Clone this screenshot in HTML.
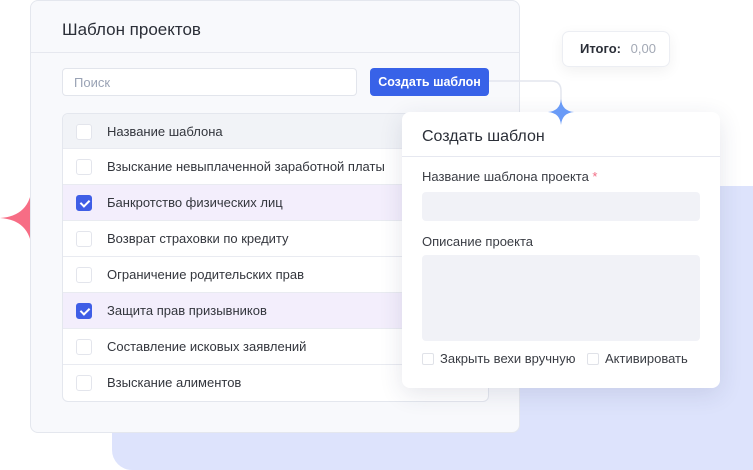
<!DOCTYPE html>
<html><head><meta charset="utf-8"><style>
*{box-sizing:border-box;margin:0;padding:0}
html,body{width:753px;height:470px;overflow:hidden}
body{background:#fff;font-family:"Liberation Sans",sans-serif;position:relative;color:#2b2f38}
.abs{position:absolute}
.bg{left:112px;top:186px;width:661px;height:284px;background:#dde3fc;border-radius:20px}
.card{left:30px;top:0;width:490px;height:433px;background:#f8f9fc;border:1px solid #e4e7ee;border-radius:8px}
.card h1{position:absolute;left:31px;top:19px;font-size:17px;font-weight:400;color:#2b2f38}
.card .hl{position:absolute;left:0;right:0;top:51px;border-top:1px solid #e6e8ef}
.search{left:62px;top:68px;width:295px;height:28px;background:#fff;border:1px solid #e2e5ec;border-radius:4px;font-size:13px;color:#9aa3b5;padding:6px 11px}
.btn{left:370px;top:68px;width:119px;height:28px;background:#3862e8;border-radius:4px;color:#fff;font-size:12.5px;font-weight:bold;text-align:center;line-height:28px}
.table{left:62px;top:113px;width:427px;height:289px;background:#fff;border:1px solid #e4e7ee;border-radius:6px;overflow:hidden}
.row{height:36px;border-bottom:1px solid #e9ebf1;position:relative;font-size:13px;line-height:35px;padding-left:44px;color:#33363d}
.row.h{background:#f1f3f7;height:35px}
.row.c{background:#f3eefc}
.cb{position:absolute;left:13px;top:10px;width:16px;height:16px;border:1px solid #e3e5ec;border-radius:3px;background:#fff}
.cb.on{background:#3f5ee6;border-color:#3f5ee6}
.cb.on:after{content:"";position:absolute;left:5px;top:2px;width:4px;height:7px;border:solid #fff;border-width:0 2px 2px 0;transform:rotate(45deg)}
.itogo{left:562px;top:31px;width:108px;height:36px;background:#fff;border:1px solid #eceef3;border-radius:7px;box-shadow:0 4px 14px rgba(0,0,0,.06);font-size:13px;line-height:34px;padding-left:17px}
.modal{left:402px;top:112px;width:318px;height:276px;background:#fff;border-radius:8px;box-shadow:0 6px 24px rgba(40,50,90,.12)}
.modal h2{position:absolute;left:20px;top:16px;font-size:16px;font-weight:400}
.lbl{font-size:13px;color:#3a3d44}
.inp{background:#f1f2f7;border-radius:4px}
.sc{width:12px;height:12px;border:1px solid #e0e2e8;border-radius:2px;display:inline-block;vertical-align:-2px;margin-right:6px}
</style></head><body>
<div class="abs bg"></div>
<svg class="abs" style="left:0;top:186px" width="40" height="64" viewBox="0 0 40 64"><path d="M32 0 Q30 30 0 32 Q30 34 32 64 Q34 34 64 32 Q34 30 32 0Z" fill="#f76d85"/></svg>
<div class="abs card"><h1>Шаблон проектов</h1><div class="hl"></div></div>
<div class="abs search">Поиск</div>
<div class="abs btn">Создать шаблон</div>
<div class="abs table">
<div class="row h"><span class="cb"></span>Название шаблона</div>
<div class="row"><span class="cb"></span>Взыскание невыплаченной заработной платы</div>
<div class="row c"><span class="cb on"></span>Банкротство физических лиц</div>
<div class="row"><span class="cb"></span>Возврат страховки по кредиту</div>
<div class="row"><span class="cb"></span>Ограничение родительских прав</div>
<div class="row c"><span class="cb on"></span>Защита прав призывников</div>
<div class="row"><span class="cb"></span>Составление исковых заявлений</div>
<div class="row" style="border:0"><span class="cb"></span>Взыскание алиментов</div>
</div>
<svg class="abs" style="left:489px;top:75px" width="90" height="55"><path d="M0 6 H62 Q72 6 72 16 V30" fill="none" stroke="#e3e6ee" stroke-width="1.5"/></svg>
<div class="abs itogo"><b style="font-weight:600">Итого:</b> <span style="color:#a3a9b5;margin-left:6px">0,00</span></div>
<div class="abs modal">
<h2>Создать шаблон</h2>
<div class="abs" style="left:0;right:0;top:44px;border-top:1px solid #e6e8f0"></div>
<div class="abs lbl" style="left:20px;top:57px">Название шаблона проекта <span style="color:#f26d85">*</span></div>
<div class="abs inp" style="left:20px;top:80px;width:278px;height:29px"></div>
<div class="abs lbl" style="left:20px;top:122px">Описание проекта</div>
<div class="abs inp" style="left:20px;top:143px;width:278px;height:86px"></div>
<div class="abs lbl" style="left:20px;top:239px"><span class="sc"></span>Закрыть вехи вручную</div>
<div class="abs lbl" style="left:185px;top:239px"><span class="sc"></span>Активировать</div>
</div>
<svg class="abs" style="left:548px;top:99px" width="26" height="26" viewBox="0 0 26 26"><path d="M13 0 Q12 12 0 13 Q12 14 13 26 Q14 14 26 13 Q14 12 13 0Z" fill="#6a9bf7"/></svg>
</body></html>
